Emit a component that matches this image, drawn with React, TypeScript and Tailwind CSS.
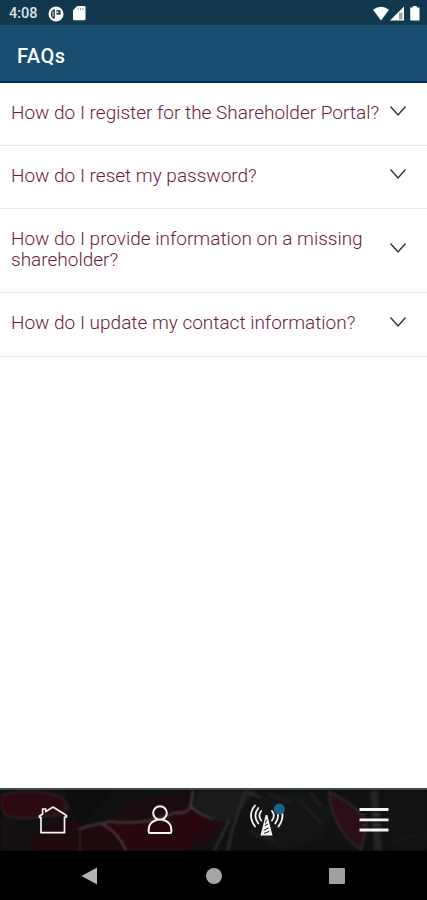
import { useState } from 'react';

const questions = [
  { text: 'How do I register for the Shareholder Portal?', height: 'h-[63px]' },
  { text: 'How do I reset my password?', height: 'h-[63px]' },
  { text: 'How do I provide information on a missing shareholder?', height: 'h-[84px]' },
  { text: 'How do I update my contact information?', height: 'h-[64px]' },
];

function StatusBar() {
  return (
    <div className="flex h-[25px] shrink-0 items-center bg-[#12384e] text-white">
      <span className="ml-[9px] mt-[3px] w-[39px] text-[14.5px] leading-4 font-medium text-[#dce3e7]">4:08</span>
      <svg className="mt-[2px]" width="16" height="16" viewBox="0 0 16 16">
        <circle cx="8" cy="8" r="7.5" fill="#fff" />
        <path d="M6.8 3.2a4.9 4.9 0 0 0 0 9.6z" fill="#12384e" />
        <path d="M8.4 4.2h4.2v4.4H8.4z" fill="#12384e" />
        <path d="M4.6 5.6h.9v4.8h-.9zM8.4 5.8h2.2v1.2H8.4z" fill="#fff" />
      </svg>
      <svg className="ml-[9px] mt-[2px]" width="13" height="15" viewBox="0 0 13 15">
        <path d="M4.2 0H11.3q1.2 0 1.2 1.2V13q0 1.2-1.2 1.2H1.2Q0 14.2 0 13V4.2z" fill="#fff" />
        <path d="M4.6 2h1v2h-1zM7 2h1v2H7zM9.4 2h1v2h-1z" fill="#8fa0aa" />
      </svg>
      <svg className="ml-auto mr-[3px] mt-[2px]" width="51" height="16" viewBox="0 0 51 16">
        <path d="M0 3.8Q8-2.2 16 3.8L8 14.5z" fill="#fff" />
        <path d="M31 0.5V14.5H17z" fill="#fff" />
        <path d="M26 6.5h3.5v7H26z" fill="#9aa5ac" />
        <path d="M39.8 0h4v1.5h2.7V14.5H37.2V1.5h2.6z" fill="#fff" />
      </svg>
    </div>
  );
}

function TabBackground() {
  return (
    <svg className="absolute inset-0 blur-[0.8px]" width="427" height="61" viewBox="0 0 427 62" preserveAspectRatio="none">
      <rect width="427" height="62" fill="#111012" />
      <path d="M0 6Q30-4 62 7Q72 24 55 26Q28 31 8 27Q0 20 0 6z" fill="#2b0a11" stroke="#2d2023" strokeWidth="2" />
      <path d="M30 62Q34 36 60 32Q90 28 110 42L126 62z" fill="#1e090d" />
      <path d="M0 33Q15 29 30 38L34 62H0z" fill="#171012" />
      <path d="M66 0h50L82 36Q70 24 66 0z" fill="#0d0d0f" />
      <path d="M105 34Q130 2 192 4L190 21Q160 33 135 33z" fill="#1b0c11" />
      <path d="M104 35L136 34Q168 32 190 20L214 34L184 62H127Q116 43 104 41z" fill="#28080e" />
      <path d="M78 40Q96 34 102 34Q119 44 126 62M102 36Q106 30 116 33Q155 34 174 23Q190 25 191 14L193 0M191 17Q201 26 214 30" fill="none" stroke="#4d3d40" strokeWidth="2" />
      <path d="M66 13Q72 20 58 26M80 42v20" fill="none" stroke="#2c2023" strokeWidth="2" />
      <path d="M192 62Q211 54 225 29L214 32z" fill="#24090f" />
      <path d="M198 0h60L229 34L214 31L193 16z" fill="#1a1a1b" />
      <path d="M246 0L232 41L228 62M247 2L280 16M229 31L214 62" fill="none" stroke="#2e2d2e" strokeWidth="2.5" />
      <path d="M260 8L301 1L333 20L323 48L285 62L249 46z" fill="#141515" />
      <path d="M268 4l25 9M299 9l23 26M249 42l27 10M310 3l11 13" stroke="#1d201e" strokeWidth="3" />
      <path d="M329 2Q358 16 367 34L361 61Q332 40 329 2z" fill="#290e15" stroke="#2f2a2c" strokeWidth="2" />
      <path d="M374 0l4 62" stroke="#232324" strokeWidth="8" />
      <path d="M384 0h43v62h-41z" fill="#131214" />
      <path d="M392 54Q407 44 427 46" fill="none" stroke="#1b1417" strokeWidth="5" />
    </svg>
  );
}

function HomeIcon() {
  return (
    <svg width="30" height="30" viewBox="0 0 30 30" fill="none" stroke="#f5f5f5" strokeWidth="1.7" strokeLinejoin="round" strokeLinecap="round">
      <path d="M1.5 11L4.6 9V4H7.8V6.6L15 2L28.5 10.5M1.5 11V12.3H3V27.7H26.5V12H28.5V10.5" />
    </svg>
  );
}

function PersonIcon() {
  return (
    <svg width="30" height="32" viewBox="0 0 30 32" fill="none" stroke="#f5f5f5" strokeWidth="2" strokeLinejoin="round">
      <circle cx="15" cy="9" r="6.8" />
      <path d="M12.8 15.5Q3.7 18 3.7 25V27.5Q3.7 29 5 29H25Q26.3 29 26.3 27.5V25Q26.3 18 17.2 15.5" />
    </svg>
  );
}

function TowerIcon() {
  return (
    <svg width="36" height="34" viewBox="0 0 36 34" fill="none" stroke="#f5f5f5" strokeWidth="1.8" strokeLinecap="round">
      <path d="M6 2.5Q-2 12 6 23.5M9.3 5Q3.5 12.5 9.3 20.5M12.2 8Q8.5 12.5 12.2 17.5M29.5 2.5Q37.5 12 29.5 23.5M26.2 5Q32 12.5 26.2 20.5M23 8Q26.7 12.5 23 17.5" />
      <path d="M16.6 12h1.7L23.5 32.5h-12z" fill="#f5f5f5" stroke="none" />
      <path d="M17.3 17L16.5 20M16.2 22.5L18.6 21.3M15 27.2L19.4 25M15.4 30.3L20 28.5" stroke="#161617" strokeWidth="1" />
      <circle cx="30.3" cy="6" r="5.5" fill="#1c6286" stroke="none" />
    </svg>
  );
}

function MenuIcon() {
  return (
    <svg width="30" height="26" viewBox="0 0 30 26">
      <path d="M.5 2.5h29M.5 12.8h29M.5 23h29" stroke="#f5f5f5" strokeWidth="2.8" />
      <path d="M2 7.7h4M14 7.7h8M3 18h4M14 18h8" stroke="#3a3a3b" strokeWidth="1" />
    </svg>
  );
}

const tabs = [
  { name: 'home', icon: <HomeIcon /> },
  { name: 'profile', icon: <PersonIcon /> },
  { name: 'news', icon: <TowerIcon /> },
  { name: 'menu', icon: <MenuIcon /> },
];

export default function App() {
  const [selected, setSelected] = useState(-1);

  return (
    <div className="flex h-[900px] w-[427px] flex-col overflow-hidden bg-white font-['Roboto',sans-serif]">
      <StatusBar />

      <header className="flex h-[58px] shrink-0 items-center border-b-2 border-[#0b2d5c] bg-[#184f70] pt-[5px] pl-[17px]">
        <h1 className="text-[20px] leading-6 font-medium tracking-[0.5px] text-white">FAQs</h1>
      </header>

      <main className="flex-1">
        {questions.map((question, index) => (
          <button
            key={question.text}
            onClick={() => setSelected(selected === index ? -1 : index)}
            className={`flex w-full items-start border-b border-[#e9e9e9] pl-[11px] text-left ${question.height}`}
          >
            <span className="mt-[19px] w-[372px] text-[19px] leading-[21px] font-light text-[#6c1a40]">{question.text}</span>
            <svg className="mt-[-6px] ml-[6px] self-center" width="18" height="12" viewBox="0 0 18 12">
              <path d="M1.5 1.5L9 10L16.5 1.5" fill="none" stroke="#333" strokeWidth="1.4" />
            </svg>
          </button>
        ))}
      </main>

      {/* App tabs */}
      <nav className="relative h-[63px] shrink-0 overflow-hidden border-t-2 border-[#3e4b49] bg-black">
        <TabBackground />
        <div className="relative grid h-full grid-cols-4 pb-px">
          {tabs.map((tab) => (
            <button key={tab.name} className="flex items-center justify-center">
              {tab.icon}
            </button>
          ))}
        </div>
      </nav>

      {/* Android navigation */}
      <div className="flex h-[49px] shrink-0 items-center bg-black pl-[81px]">
        <svg width="17" height="18" viewBox="0 0 17 18">
          <path d="M0.5 9L16 0.5V17.5z" fill="#b2b2b2" />
        </svg>
        <span className="ml-[108px] size-4 rounded-full bg-[#a6a6a6]" />
        <span className="ml-[107px] size-4 rounded-[1px] bg-[#a0a0a0]" />
      </div>
    </div>
  );
}
